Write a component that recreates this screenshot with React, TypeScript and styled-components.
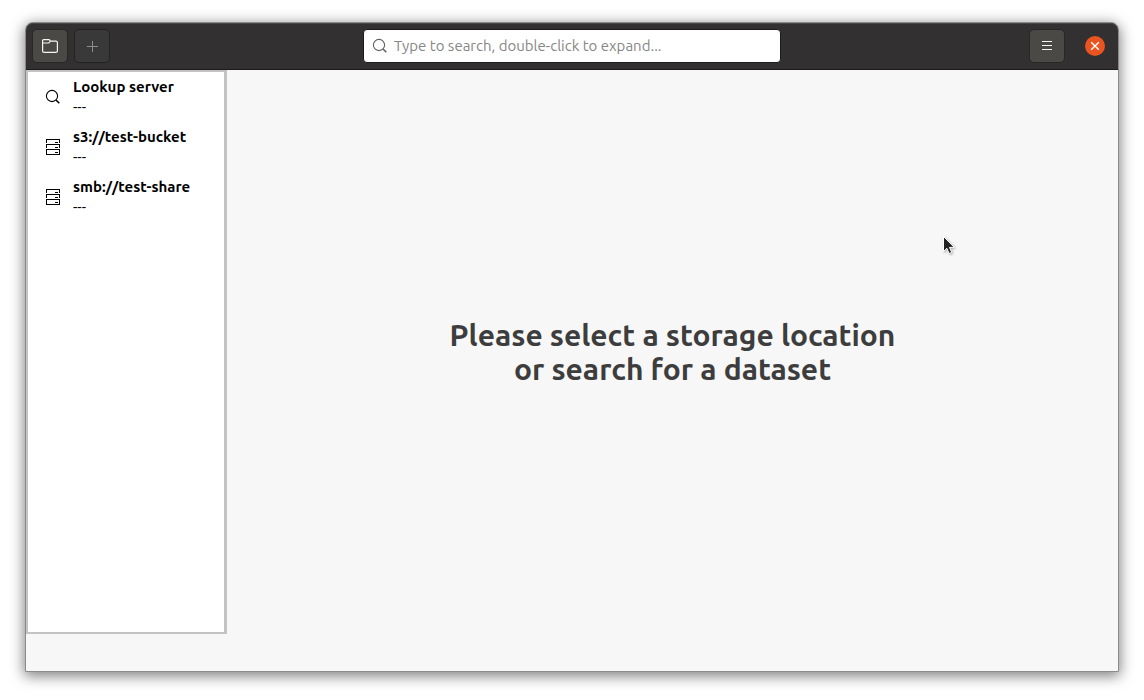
import React from "react";
import styled, { createGlobalStyle } from "styled-components";

const GlobalStyle = createGlobalStyle`
  *, *::before, *::after { box-sizing: border-box; }
  body {
    margin: 0;
    background: #ffffff;
    color: #000000;
    font-family: Ubuntu, "Noto Sans", sans-serif;
    font-size: 15px;
    line-height: 20px;
  }
`;

const Desktop = styled.div`
  position: relative;
  display: flex;
  min-height: 100vh;
  padding: 22px 25px 28px;
`;

const Window = styled.div`
  flex: 1;
  display: flex;
  flex-direction: column;
  min-width: 0;
  border: 1px solid #8a8a88;
  border-radius: 8px 8px 0 0;
  background: #f7f7f7;
  box-shadow: 0 3px 14px 1px rgba(0, 0, 0, 0.5);
`;

const HeaderBar = styled.header`
  display: grid;
  grid-template-columns: 1fr minmax(0, 418px) 1fr;
  align-items: center;
  height: 47px;
  border-bottom: 1px solid #1c1b1b;
  border-radius: 7px 7px 0 0;
  background: #323031;
  box-shadow: inset 0 1px 0 #484646;
`;

const HeaderGroup = styled.div<{ $end?: boolean }>`
  display: flex;
  align-items: center;
  justify-content: ${(p) => (p.$end ? "flex-end" : "flex-start")};
  gap: ${(p) => (p.$end ? 20 : 6)}px;
  padding: ${(p) => (p.$end ? "0 13px 0 0" : "0 0 0 6px")};
`;

const ToolButton = styled.button`
  display: grid;
  place-items: center;
  width: 36px;
  height: 34px;
  padding: 0;
  border: 1px solid #282727;
  border-radius: 5px;
  background: #4a4946;
  color: #f6f6f5;

  &:disabled {
    border-color: #232222;
    background: #3a3939;
    color: #8f8e8d;
  }
`;

const CloseButton = styled.button`
  display: grid;
  place-items: center;
  width: 20px;
  height: 20px;
  padding: 0;
  border: 0;
  border-radius: 50%;
  background: #e95420;
  color: #ffffff;
`;

const SearchField = styled.label`
  display: flex;
  align-items: center;
  gap: 6px;
  height: 34px;
  padding: 0 8px;
  border: 1px solid #1c1b1b;
  border-radius: 4px;
  background: #ffffff;
  color: #606060;
`;

const SearchInput = styled.input`
  flex: 1;
  min-width: 0;
  padding: 0;
  border: 0;
  outline: 0;
  background: transparent;
  color: #000000;
  font: inherit;

  &::placeholder {
    color: #868686;
    opacity: 1;
  }
`;

const Body = styled.div`
  flex: 1;
  display: flex;
`;

const Sidebar = styled.nav`
  flex: none;
  width: 201px;
  border: solid #c3c3c3;
  border-width: 2px 3px 2px 2px;
  background: #ffffff;
`;

const LocationList = styled.ul`
  margin: 0;
  padding: 0;
  list-style: none;
`;

const LocationLink = styled.a`
  display: flex;
  align-items: center;
  gap: 12px;
  height: 50px;
  padding: 0 17px;
  color: inherit;
  text-decoration: none;
`;

const LocationText = styled.span`
  display: flex;
  flex-direction: column;
  white-space: nowrap;
`;

const Name = styled.strong`
  font-weight: 700;
`;

const Detail = styled.span`
  font-weight: 400;
`;

const Main = styled.main`
  flex: 1;
  display: flex;
  align-items: center;
  justify-content: center;
`;

const Message = styled.h1`
  margin: 0;
  color: #3d3d3d;
  font-size: 30px;
  font-weight: 700;
  line-height: 34px;
  text-align: center;
`;

const StatusBar = styled.footer`
  height: 37px;
`;

const Pointer = styled.svg`
  position: absolute;
  left: 942px;
  top: 235px;
  pointer-events: none;
  filter: drop-shadow(1px 1px 1px rgba(0, 0, 0, 0.3));
`;

const SearchIcon = () => (
  <svg width="16" height="16" viewBox="0 0 16 16" fill="none" stroke="currentColor" aria-hidden="true">
    <circle cx="7" cy="7" r="5.6" strokeWidth="1.1" />
    <path d="M11 11 14.3 14.3" strokeWidth="1.6" />
  </svg>
);

const ServerIcon = () => (
  <svg
    width="16"
    height="16"
    viewBox="0 0 16 16"
    fill="none"
    stroke="currentColor"
    shapeRendering="crispEdges"
    aria-hidden="true"
  >
    <path d="M1.5 4V.5h13V4M1.5 9V5.5h13V9M1.5 10.5h13v5h-13zM10 3.5h3M10 8.5h3M10 13.5h3" />
  </svg>
);

const FolderIcon = () => (
  <svg width="16" height="16" viewBox="0 0 16 16" fill="none" stroke="currentColor" strokeWidth="1.2" aria-hidden="true">
    <path d="M.6 5V2.6Q.6 1.6 1.6 1.6h5q1 0 1.5 1l.4.6h5.4q1.5 0 1.5 1.5v8.2q0 1.5-1.5 1.5H2.1Q.6 14.4.6 12.9V5h5.6q1 0 1.5-1l.6-.8" />
  </svg>
);

const PlusIcon = () => (
  <svg width="16" height="16" viewBox="0 0 16 16" fill="none" stroke="currentColor" aria-hidden="true">
    <path d="M8.5 3v11M3 8.5h11" />
  </svg>
);

const MenuIcon = () => (
  <svg width="16" height="16" viewBox="0 0 16 16" fill="none" stroke="currentColor" aria-hidden="true">
    <path d="M3 3.5h10M3 7.5h10M3 11.5h10" />
  </svg>
);

const CloseIcon = () => (
  <svg width="10" height="10" viewBox="0 0 10 10" fill="none" stroke="currentColor" strokeWidth="1.4" aria-hidden="true">
    <path d="m1.2 1.2 7.6 7.6m0-7.6L1.2 8.8" />
  </svg>
);

const locations = [
  { name: "Lookup server", Icon: SearchIcon },
  { name: "s3://test-bucket", Icon: ServerIcon },
  { name: "smb://test-share", Icon: ServerIcon },
];

export default function App() {
  return (
    <>
      <GlobalStyle />
      <Desktop>
        <Window>
          <HeaderBar>
            <HeaderGroup>
              <ToolButton type="button" aria-label="Open folder">
                <FolderIcon />
              </ToolButton>
              <ToolButton type="button" aria-label="Add dataset" disabled>
                <PlusIcon />
              </ToolButton>
            </HeaderGroup>
            <SearchField>
              <SearchIcon />
              <SearchInput
                type="text"
                aria-label="Search datasets"
                placeholder="Type to search, double-click to expand..."
              />
            </SearchField>
            <HeaderGroup $end>
              <ToolButton type="button" aria-label="Menu">
                <MenuIcon />
              </ToolButton>
              <CloseButton type="button" aria-label="Close">
                <CloseIcon />
              </CloseButton>
            </HeaderGroup>
          </HeaderBar>
          <Body>
            <Sidebar aria-label="Storage locations">
              <LocationList>
                {locations.map(({ name, Icon }) => (
                  <li key={name}>
                    <LocationLink href="#">
                      <Icon />
                      <LocationText>
                        <Name>{name}</Name>
                        <Detail>---</Detail>
                      </LocationText>
                    </LocationLink>
                  </li>
                ))}
              </LocationList>
            </Sidebar>
            <Main>
              <Message>
                Please select a storage location
                <br />
                or search for a dataset
              </Message>
            </Main>
          </Body>
          <StatusBar />
        </Window>
        <Pointer width="14" height="21" viewBox="0 0 14 21" aria-hidden="true">
          <path
            d="M1.5 1.5v15l3.4-3.2 2.2 5.2 2.6-1.1-2.2-5h4.8z"
            fill="#222222"
            stroke="#ffffff"
            strokeLinejoin="round"
          />
        </Pointer>
      </Desktop>
    </>
  );
}
